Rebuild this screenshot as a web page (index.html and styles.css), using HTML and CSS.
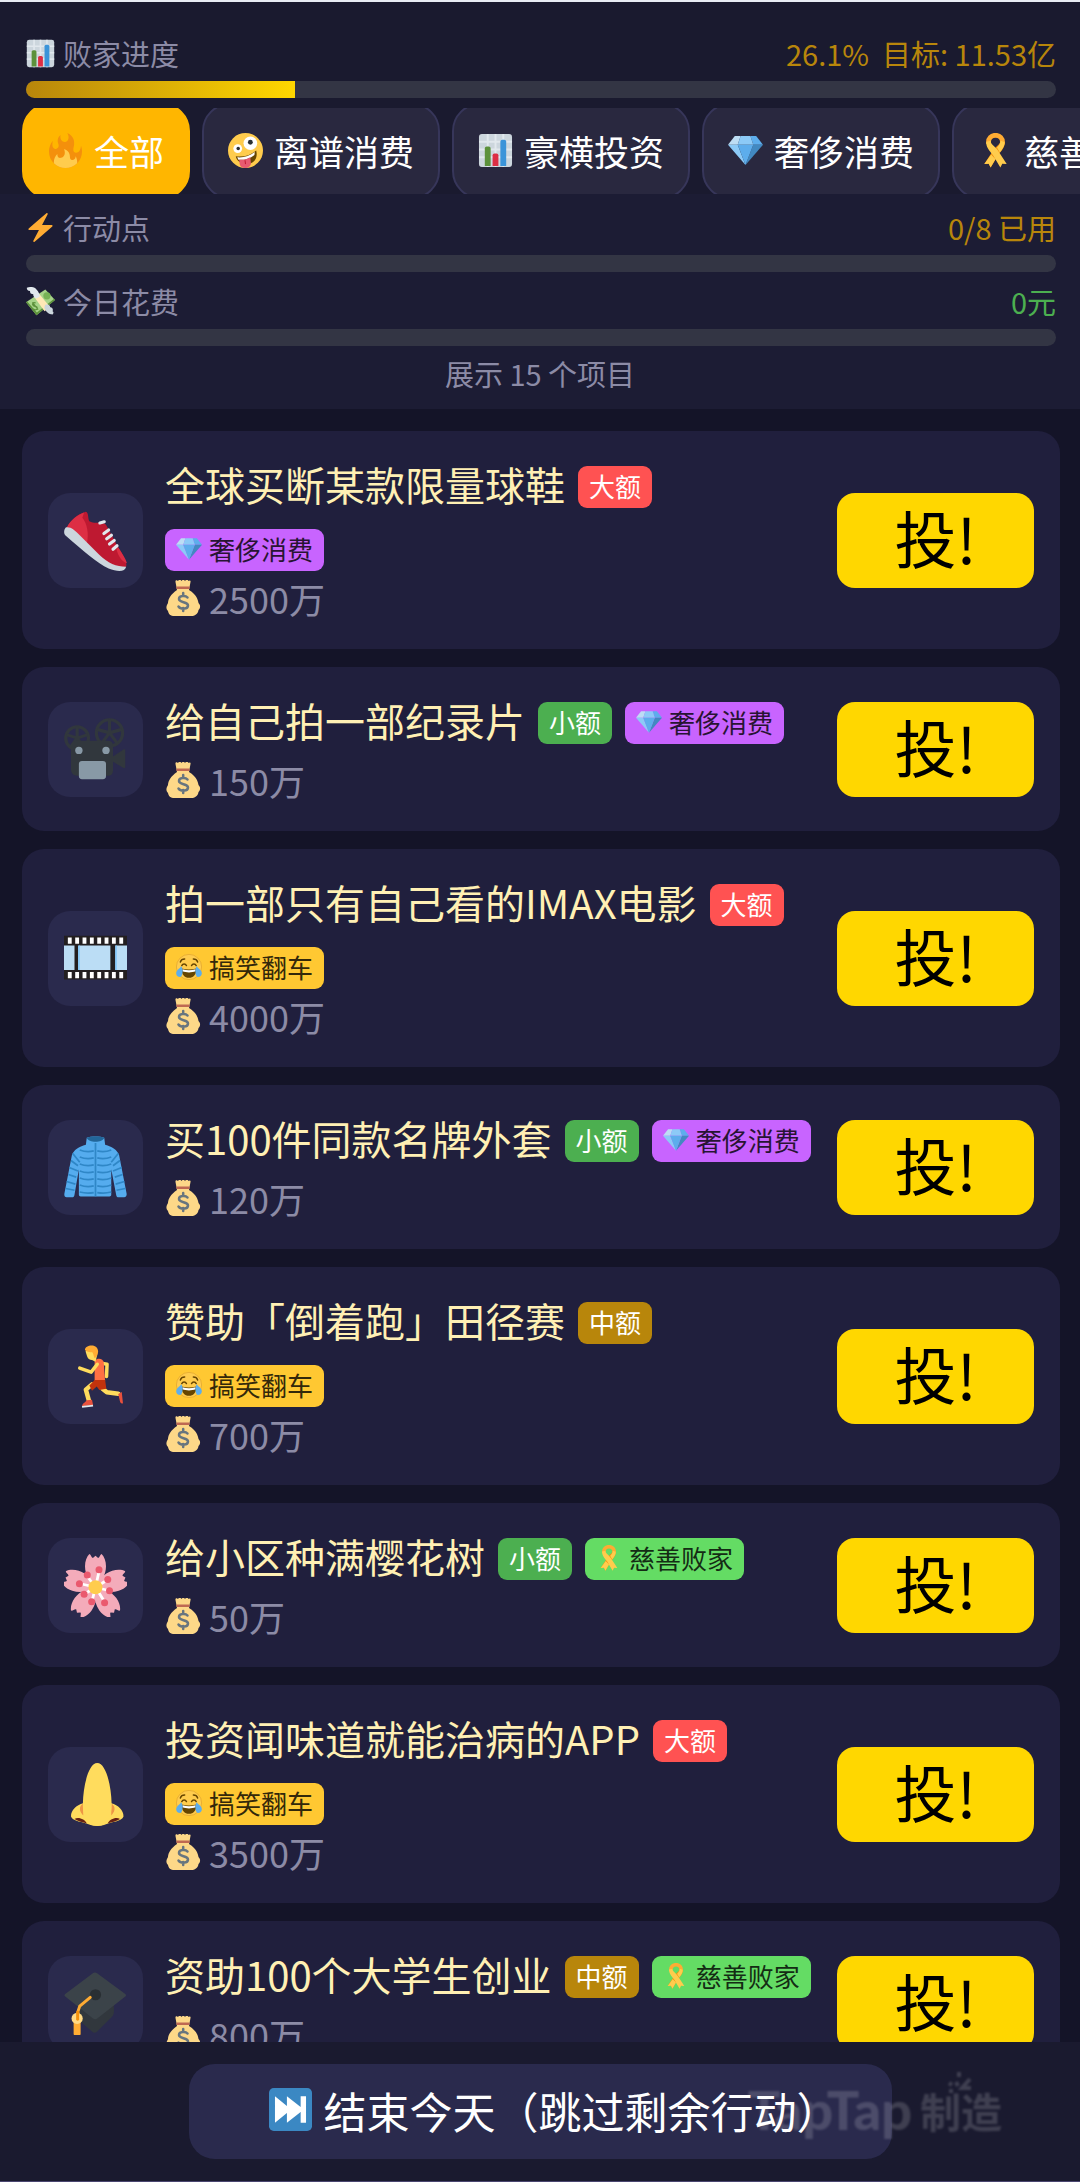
FILE: index.html
```html
<!DOCTYPE html>
<html lang="zh-CN">
<head>
<meta charset="UTF-8" />
<meta name="viewport" content="width=device-width, initial-scale=1" />
<title>败家进度</title>
<link rel="stylesheet" href="styles.css">
</head>
<body>

<!-- Icon set -->
<svg class="sprite" aria-hidden="true">
  <symbol id="i-chart" viewBox="0 0 36 36">
    <rect x="1" y="1" width="34" height="34" rx="3" fill="#ccd6dd"/>
    <path d="M10 1v34M18 1v34M26 1v34M1 9h34M1 17h34M1 25h34" stroke="#e1e8ed" stroke-width="2"/>
    <path fill="#5c913b" d="M13 34H7V16c0-1.100.9-2 2-2h2c1.100 0 2 .9 2 2z"/>
    <path fill="#dd2e44" d="M21 34h-6V23c0-1.100.9-2 2-2h2c1.100 0 2 .9 2 2z"/>
    <path fill="#3b94d9" d="M29 34h-6V9c0-1.100.9-2 2-2h2c1.100 0 2 .9 2 2z"/>
  </symbol>
  <symbol id="i-fire" viewBox="0 0 36 36">
    <path fill="#f4900c" d="M35 19c0-2.062-.367-4.039-1.04-5.868-.46 5.389-3.333 8.157-6.335 6.868-2.812-1.208-.917-5.917-.777-8.164.236-3.809-.012-8.169-6.931-11.794 2.875 5.5.333 8.917-2.333 9.125-2.958.231-5.667-2.542-4.667-7.042-3.238 2.386-3.332 6.402-2.333 9 1.042 2.708-.042 4.958-2.583 5.208-2.84.28-4.418-3.041-2.963-8.333C2.52 10.965 1 14.805 1 19c0 9.389 7.611 17 17 17s17-7.611 17-17z"/>
    <path fill="#ffcc4d" d="M28.394 23.999c.148 3.084-2.561 4.293-4.019 3.709-2.106-.843-1.541-2.291-2.083-5.291s-2.625-5.083-5.708-6c2.25 6.333-1.247 8.667-3.08 9.084-1.872.426-3.753-.001-3.968-4.007C7.352 23.668 6 26.676 6 30c0 .368.023.73.055 1.09C9.125 34.124 13.342 36 18 36s8.875-1.876 11.945-4.91c.032-.36.055-.722.055-1.09 0-2.187-.584-4.236-1.606-6.001z"/>
  </symbol>
  <symbol id="i-zany" viewBox="0 0 36 36">
    <circle cx="18" cy="18" r="18" fill="#ffcc4d"/>
    <circle cx="10" cy="16" r="4.500" fill="#fff"/>
    <circle cx="10.500" cy="16" r="1.800" fill="#292f33"/>
    <circle cx="23" cy="10.500" r="7" fill="#fff"/>
    <circle cx="23" cy="9.500" r="2.500" fill="#292f33"/>
    <path fill="#664500" d="M8 24c8 1 15-1 21-6 2 8-2 13-9 14-6 .5-11-3-12-8z"/>
    <path fill="#fff" d="M9.500 25c7 .5 13-1.500 18-5.500l-.3 3c-5 4-10 5.500-16.500 5z"/>
    <path fill="#e75a70" d="M11.500 27.500c4 .5 8-.5 11.500-2.500l.5 6c0 6-11 7-11.500 1z"/>
    <path stroke="#be1931" fill="none" d="M17.500 28l.5 4"/>
  </symbol>
  <symbol id="i-gem" viewBox="0 0 36 36">
    <path fill="#bdddf4" d="M13 3H7l-7 9h10z"/>
    <path fill="#5dadec" d="M36 12l-7-9h-6l3 9z"/>
    <path fill="#4289c1" d="M26 12h10L18 33z"/>
    <path fill="#8ccaf7" d="M10 12H0l18 21zm3-9l-3 9h16l-3-9z"/>
    <path fill="#5dadec" d="M18 33l-8-21h16z"/>
  </symbol>
  <symbol id="i-ribbon" viewBox="0 0 36 36">
    <path fill="none" stroke="#ffac33" stroke-width="5" d="M11 11C9-.5 27-.5 25 11"/>
    <path fill="#f4900c" d="M27.500 9c.5 5-3 9-7 14L13 35.500l-2-4-4.500.5L15.500 18C19 13 23 12 23 8z"/>
    <path fill="#ffcc4d" d="M13.500 22l4.500 5-5 8.500-2-4-4.500.5zM27.500 9c.3 4-2 7-5 11l-3-5c2-2 3.500-4 3.500-7z"/>
    <path fill="#ffcc4d" d="M8.500 9c-.5 5 3 9 7 14L23 35.500l2-4 4.500.5L20.500 18C17 13 13 12 13 8z"/>
  </symbol>
  <symbol id="i-bolt" viewBox="0 0 36 36">
    <path fill="#ffac33" d="M32.938 15.651C32.792 15.260 32.418 15 32 15H19.925L26.890 1.458c.219-.426.106-.947-.271-1.243C26.437.071 26.218 0 26 0c-.233 0-.466.082-.653.243L18 6.588 3.347 19.243c-.316.273-.43.714-.284 1.105S3.582 21 4 21h12.075L9.110 34.542c-.219.426-.106.947.271 1.243.182.144.401.215.619.215.233 0 .466-.082.653-.243L18 29.412l14.653-12.655c.317-.273.43-.714.285-1.106z"/>
  </symbol>
  <symbol id="i-cash" viewBox="0 0 36 36">
    <path fill="#a6d388" d="M0 19L24 3l12 13-23 19z"/>
    <path fill="#5c913b" d="M0 19l13 16 23-19-1-1.500-21.500 17L1.500 18z"/>
    <circle cx="26" cy="11" r="4.500" fill="#77b255"/>
    <path fill="none" stroke="#5c913b" stroke-width="1.500" d="M12 20c-3-2-5 1-3 3s5 0 5 3-4 3-5 1M8 19l7 9"/>
    <path fill="#ffe8b6" d="M10 12l6-4 14 17-7 5z"/>
    <path fill="#e1e8ed" d="M1 1c5-2 10-1 12 2 3 3 4 6 4 9l-4 2c-4-1-4-4-4-5-4 0-4-3-4-4-3 0-4-2-4-4z"/>
    <path fill="#ccd6dd" d="M24 22c4-1 6 1 6 3 3 0 4 3 3 5 2 1 1 3 0 4-5 0-8-3-9-6-2-2-1-4 0-6z"/>
  </symbol>
  <symbol id="i-bag" viewBox="0 0 36 36">
    <path fill="#fdd888" d="M24 10c8 5 9 10 9.500 13 3 3 1 6 0 7-.5 4-4 6-7 6H9.500c-4 0-6-2-6.500-5-3-3-1-6 0-8 0-4 3-9 9-13z"/>
    <path fill="#fdd888" d="M12 10L10.500 2c-.3-2 1.500-2 2.500-1 1-1.500 2.500-1.500 3.500 0 1-1.500 2.500-1.500 3.500 0 1-1.500 3-1.500 3.500 0 1-1 2.500-.5 2 1L24 10z"/>
    <path fill="#bf6952" d="M11.500 6.500h13V9h-13z"/>
    <path fill="none" stroke="#67757f" stroke-width="2.500" stroke-linecap="round" d="M22.500 17.500c-2-2.500-8.500-2-8.500 1.500 0 4 9 2.500 9 6.500s-7.500 4-9.500 1M18.200 13v3M18.200 28v3"/>
  </symbol>
  <symbol id="i-joy" viewBox="0 0 36 36">
    <circle cx="18" cy="18" r="17.500" fill="#ffcc4d" stroke="#e0a52c"/>
    <path fill="none" stroke="#664500" stroke-width="2" stroke-linecap="round" d="M8 16c1.500-3 5-3 6.500 0M21.500 16c1.500-3 5-3 6.500 0M6 11c1-3 3-4 6-4M30 11c-1-3-3-4-6-4"/>
    <path fill="#664500" d="M8 20c6 2 14 2 20 0 1 8-4 13-10 13S7 28 8 20z"/>
    <path fill="#fff" d="M9 21c6 2 12 2 18 0v3c-5 2-13 2-18 0z"/>
    <path fill="#5dadec" d="M7 17c3 2 3 13-1 15-5 0-7-5-5-8 1-3 5-4 6-7zM29 17c-3 2-3 13 1 15 5 0 7-5 5-8-1-3-5-4-6-7z"/>
  </symbol>
  <symbol id="i-shoe" viewBox="0 0 36 36">
    <path fill="#be1931" d="M12.500 1.500C7 3 3 7 1 12l17 15c6 5 12 7 17.500 6 .8-3-2-7-4.500-11L24 9c-2-2.500-6 0-9.500-2-1-2-.3-5-2-5.500z"/>
    <path fill="#dd2e44" d="M11.500 2C6 4 2.500 8 1 12c5 1 9 4 12 8 1.500-6 0-12-2.500-15zM30 23c1 4 3 7 6 8-1-3-3-6-5-9z"/>
    <path fill="#ccd6dd" d="M1 10.500c3-.5 5 1.500 8 4.500l11 11c5 5 10 7 15.500 7-.5 3-5 3-10 1C19 31 11 24 .7 15c-1-1-.7-3.500.3-4.500z"/>
    <path fill="none" stroke="#e1e8ed" stroke-width="1.800" stroke-linecap="round" d="M20.500 8l2.500-.7M22.800 14l2.700-2M24.400 17l2.700-2M26 20l2.700-2M28 23l2.300-2"/>
  </symbol>
  <symbol id="i-camera" viewBox="0 0 36 36">
    <g fill="none" stroke="#31373d" stroke-width="1.800">
      <circle cx="7.500" cy="11.500" r="6.500"/>
      <circle cx="26" cy="8.500" r="7.500"/>
      <path d="M7.500 11.500V5M7.500 11.500l6-2M7.500 11.500l4 5.500M7.500 11.500l-4 5.500M7.500 11.500l-6-2M26 8.500V1M26 8.500l7-2M26 8.500l4.500 6M26 8.500l-4.500 6M26 8.500l-7-2"/>
    </g>
    <path fill="#31373d" d="M8 13h17c2 0 3 1 3 3v6l6-4c.5-.3 1 0 1 .5V28c0 .6-.5.800-1 .5l-6-3.500v5c0 2-1 3-3 3H8c-2 0-4-1-4-3.500V16c0-2 2-3 4-3z"/>
    <circle cx="8.500" cy="18.500" r="2.100" fill="#8899a6"/>
    <circle cx="24" cy="18.500" r="2.100" fill="#8899a6"/>
    <rect x="8.500" y="24.500" width="15.500" height="10.500" rx="1.800" fill="#8899a6"/>
  </symbol>
  <symbol id="i-film" viewBox="0 0 36 36">
    <path fill="#231f20" d="M0 5h36v25H0z"/>
    <path fill="#bbddf5" d="M0 10.500h6v14H0zM8.500 10.500h18v14h-18zM29.500 10.500H36v14h-6.500z"/>
    <path fill="none" stroke="#88c9f9" d="M8.500 10.500v14M29.700 10.500v14"/>
    <path fill="none" stroke="#fff" stroke-width="3.500" stroke-dasharray="2.200 2" d="M2.200 7.800H34M2.200 27.500H34"/>
  </symbol>
  <symbol id="i-coat" viewBox="0 0 36 36">
    <path fill="#55acee" d="M13 1c2-1 8-1 10 0l.5 4c4 1 7 3 8 6l4.300 22c.2 1-.5 2-1.500 2h-3c-1 0-1.300-.5-1.500-1.500L27 19v14.500c0 .5-.5 1-1 1H9.500c-.5 0-1-.5-1-1V19L6 33.500c-.2 1-.5 1.500-1.500 1.500h-3C.5 35 0 34 .2 33L4.500 11c1-3 4-5 8-6z"/>
    <path fill="#226699" d="M13 1c2-1 8-1 10 0-1 3-9 3-10 0z"/>
    <g fill="none" stroke="#2f87c7" stroke-width="1">
      <path d="M18 4v30.500"/>
      <path d="M9 8q4 1.500 8 .5M19 8.500q4 1 8-.5M9 12q4 1.500 8 .5M19 12.500q4 1 8-.5M9 16q4 1.500 8 .5M19 16.500q4 1 8-.5M9 20q4 1.500 8 .5M19 20.500q4 1 8-.5M9 24q4 1.500 8 .5M19 24.500q4 1 8-.5M9 28q4 1.500 8 .5M19 28.500q4 1 8-.5M9 32q4 1 8 .3M19 32.300q4 .7 8-.3"/>
      <path d="M5 10l4 5M4 14l4 3M3 18l5 2M2.500 22l4.500 1.500M1.500 26l5 1.500M1 30l5 1M31 10l-4 5M32 14l-4 3M33 18l-5 2M33.500 22L29 23.500M34.500 26l-5 1.500M35 30l-5 1"/>
    </g>
  </symbol>
  <symbol id="i-runner" viewBox="0 0 36 36">
    <g fill="none" stroke="#ffdc5d" stroke-linecap="round" stroke-linejoin="round">
      <path stroke-width="2" d="M22 10.500l2.600.5-.3 7"/>
      <path stroke-width="2.600" d="M16 22.500l-3.500 3 1.800 6.500M22 25l2.500 2 6.500.8"/>
    </g>
    <path fill="#ff7043" d="M17.500 9c2-2 5-1 5.200 1l.8 10.500h-6z"/>
    <path fill="#c1330d" d="M17.500 20h6l.7 5-4 .7-1.500-2-2.700 2.500-1.500-3z"/>
    <path fill="none" stroke="#ffdc5d" stroke-width="2" stroke-linecap="round" stroke-linejoin="round" d="M19 11l-3.500 4.500L9 13.200"/>
    <path fill="#ffdc5d" d="M12.300 3.500c1 3 1 5 3.700 5l2 1 1-4-2-4z"/>
    <path fill="#ffac33" d="M12 3c-.5-3 7-4.500 7.500.5 0 2-1 3.500-2 4-.7-1.500-.7-3-1.500-3.500-1 .3-2.500 0-4-1z"/>
    <path fill="#e8513d" d="M13 31.500l3-.2.600 3-6.300.700c0-1.500 1.500-2 2.700-3.500zM31 28l2-1.200.7 6.500c-1 .5-1.500-.3-1.700-1z"/>
    <path stroke="#e1e8ed" d="M10.300 35.300l6.300-.7"/>
  </symbol>
  <symbol id="i-blossom" viewBox="0 0 36 36">
    <g fill="#f4abba">
      <path id="petal" d="M18 19c-3-2-6-7-6-12 0-3 1-5.500 2.500-7 1 .3 1 2 2 2.300L18 1l1.500 1.300c1-.3 1-2 2-2.300C23 1.500 24 4 24 7c0 5-3 10-6 12z"/>
      <use href="#petal" transform="rotate(72 18 19)"/>
      <use href="#petal" transform="rotate(144 18 19)"/>
      <use href="#petal" transform="rotate(216 18 19)"/>
      <use href="#petal" transform="rotate(288 18 19)"/>
    </g>
    <path stroke="#fff" stroke-width="1.600" d="M18 19l2-9M18 19l-4.500-6M18 19l6.500-4M18 19l-8.500-2M18 19l8 2M18 19l-6.500 4M18 19l5 8M18 19l-2 8"/>
    <g fill="#ea596e">
      <circle cx="20" cy="9" r="2"/><circle cx="13.300" cy="12" r="2"/><circle cx="25" cy="14.500" r="2"/><circle cx="8.800" cy="17" r="2"/>
      <circle cx="26" cy="21" r="2"/><circle cx="11.500" cy="23" r="2"/><circle cx="15.800" cy="27.300" r="2"/><circle cx="23.200" cy="27.800" r="2"/>
    </g>
    <circle cx="18" cy="19" r="4" fill="#ffcc4d"/>
  </symbol>
  <symbol id="i-nose" viewBox="0 0 36 36">
    <path fill="#ffdc5d" d="M11 23c-4 1-7 4-7 7.500 1 3 7 3 10 4.500 3 1.300 7 1.300 10 0 3-1.500 9-1.500 10-4.500 0-3.500-3-6.500-7-7.500z"/>
    <path fill="#ef9645" d="M11 23c-3 2-2 5 0 7zM27 23c3 2 2 5 0 7z"/>
    <path fill="#662113" d="M6 32c2-1.500 6 0 7 2.500-2-.7-5-1-7-2.500zM32 32c-2-1.500-6 0-7 2.500 2-.7 5-1 7-2.500z"/>
    <path fill="#ffdc5d" d="M19 0c5 0 8 13 8.200 23 .2 5-1 13-8.200 13s-8.400-8-8.200-13C11 13 14 0 19 0z"/>
  </symbol>
  <symbol id="i-cap" viewBox="0 0 36 36">
    <path fill="#31373d" d="M8 19l20.500-1v5c0 1-.5 2-1.500 3l-8 8c-1 1-2 1-3 0l-7-6z"/>
    <path fill="#3b4349" d="M16.500.7c.8-.6 1.600-.6 2.400 0L35 12.500c.6.500.6 1 0 1.500L19 26.500c-.8.6-1.600.6-2.400 0L.7 14c-.6-.5-.6-1 0-1.500z"/>
    <circle cx="18" cy="13" r="3.200" fill="#292f33"/>
    <path fill="none" stroke="#ffac33" stroke-width="1.700" stroke-linecap="round" d="M15 14.500L9 19.500l-1 3V26"/>
    <path fill="none" stroke="#ffac33" stroke-width="4" stroke-linecap="round" d="M7.500 29v6"/>
    <circle cx="7.500" cy="26.500" r="3.200" fill="#ffd983"/>
    <path fill="none" stroke="#f4900c" stroke-width="1.700" stroke-linecap="round" d="M7.800 23v4"/>
  </symbol>
  <symbol id="i-next" viewBox="0 0 36 36">
    <rect width="36" height="36" rx="4" fill="#3b88c3"/>
    <path fill="#fff" d="M5 7l10 8V7l11.500 9V7H31v22h-4.500v-9L15 29v-8L5 29z"/>
  </symbol>
</svg>

<div class="app">
  <header class="top">
    <div class="stat">
      <div class="stat-row">
        <span class="stat-label"><svg class="icon"><use href="#i-chart"/></svg>败家进度</span>
        <span class="stat-value">26.1%&nbsp; 目标: 11.53亿</span>
      </div>
      <div class="bar"><div class="bar-fill" style="width: 26.1%"></div></div>
    </div>

    <!-- Category filter -->
    <nav class="tabs">
      <button class="tab active"><svg class="icon"><use href="#i-fire"/></svg>全部</button>
      <button class="tab"><svg class="icon"><use href="#i-zany"/></svg>离谱消费</button>
      <button class="tab"><svg class="icon"><use href="#i-chart"/></svg>豪横投资</button>
      <button class="tab"><svg class="icon"><use href="#i-gem"/></svg>奢侈消费</button>
      <button class="tab"><svg class="icon"><use href="#i-ribbon"/></svg>慈善败家</button>
    </nav>
  </header>

  <section class="today">
    <div class="stat">
      <div class="stat-row">
        <span class="stat-label"><svg class="icon"><use href="#i-bolt"/></svg>行动点</span>
        <span class="stat-value">0/8 已用</span>
      </div>
      <div class="bar"></div>
    </div>
    <div class="stat">
      <div class="stat-row">
        <span class="stat-label"><svg class="icon"><use href="#i-cash"/></svg>今日花费</span>
        <span class="stat-value spent">0元</span>
      </div>
      <div class="bar"></div>
    </div>
    <p class="count">展示 15 个项目</p>
  </section>

  <!-- Project list -->
  <main class="list">
    <article class="card">
      <div class="thumb"><svg><use href="#i-shoe"/></svg></div>
      <div class="info">
        <div class="head">
          <h2>全球买断某款限量球鞋</h2>
          <span class="tag big">大额</span>
          <span class="tag luxury"><svg class="icon"><use href="#i-gem"/></svg>奢侈消费</span>
        </div>
        <p class="price"><svg class="icon"><use href="#i-bag"/></svg>2500万</p>
      </div>
      <button class="buy">投!</button>
    </article>

    <article class="card">
      <div class="thumb"><svg><use href="#i-camera"/></svg></div>
      <div class="info">
        <div class="head">
          <h2>给自己拍一部纪录片</h2>
          <span class="tag small">小额</span>
          <span class="tag luxury"><svg class="icon"><use href="#i-gem"/></svg>奢侈消费</span>
        </div>
        <p class="price"><svg class="icon"><use href="#i-bag"/></svg>150万</p>
      </div>
      <button class="buy">投!</button>
    </article>

    <article class="card">
      <div class="thumb"><svg><use href="#i-film"/></svg></div>
      <div class="info">
        <div class="head">
          <h2>拍一部只有自己看的IMAX电影</h2>
          <span class="tag big">大额</span>
          <span class="tag funny"><svg class="icon"><use href="#i-joy"/></svg>搞笑翻车</span>
        </div>
        <p class="price"><svg class="icon"><use href="#i-bag"/></svg>4000万</p>
      </div>
      <button class="buy">投!</button>
    </article>

    <article class="card">
      <div class="thumb"><svg><use href="#i-coat"/></svg></div>
      <div class="info">
        <div class="head">
          <h2>买100件同款名牌外套</h2>
          <span class="tag small">小额</span>
          <span class="tag luxury"><svg class="icon"><use href="#i-gem"/></svg>奢侈消费</span>
        </div>
        <p class="price"><svg class="icon"><use href="#i-bag"/></svg>120万</p>
      </div>
      <button class="buy">投!</button>
    </article>

    <article class="card">
      <div class="thumb"><svg><use href="#i-runner"/></svg></div>
      <div class="info">
        <div class="head">
          <h2>赞助「倒着跑」田径赛</h2>
          <span class="tag medium">中额</span>
          <span class="tag funny"><svg class="icon"><use href="#i-joy"/></svg>搞笑翻车</span>
        </div>
        <p class="price"><svg class="icon"><use href="#i-bag"/></svg>700万</p>
      </div>
      <button class="buy">投!</button>
    </article>

    <article class="card">
      <div class="thumb"><svg><use href="#i-blossom"/></svg></div>
      <div class="info">
        <div class="head">
          <h2>给小区种满樱花树</h2>
          <span class="tag small">小额</span>
          <span class="tag charity"><svg class="icon"><use href="#i-ribbon"/></svg>慈善败家</span>
        </div>
        <p class="price"><svg class="icon"><use href="#i-bag"/></svg>50万</p>
      </div>
      <button class="buy">投!</button>
    </article>

    <article class="card">
      <div class="thumb"><svg><use href="#i-nose"/></svg></div>
      <div class="info">
        <div class="head">
          <h2>投资闻味道就能治病的APP</h2>
          <span class="tag big">大额</span>
          <span class="tag funny"><svg class="icon"><use href="#i-joy"/></svg>搞笑翻车</span>
        </div>
        <p class="price"><svg class="icon"><use href="#i-bag"/></svg>3500万</p>
      </div>
      <button class="buy">投!</button>
    </article>

    <article class="card">
      <div class="thumb"><svg><use href="#i-cap"/></svg></div>
      <div class="info">
        <div class="head">
          <h2>资助100个大学生创业</h2>
          <span class="tag medium">中额</span>
          <span class="tag charity"><svg class="icon"><use href="#i-ribbon"/></svg>慈善败家</span>
        </div>
        <p class="price"><svg class="icon"><use href="#i-bag"/></svg>800万</p>
      </div>
      <button class="buy">投!</button>
    </article>
  </main>

  <footer class="bottom">
    <button class="end-day"><svg class="icon"><use href="#i-next"/></svg>结束今天（跳过剩余行动）</button>
    <div class="watermark">
      <span class="brand">TapTap</span><span class="make">制造</span>
      <svg class="spark" viewBox="0 0 28 24"><path d="M3 13l3 2M13 2v5M24 9l-8 9h9M10 12l2 4M3 21h4"/></svg>
    </div>
  </footer>
</div>

</body>
</html>
```
FILE: styles.css
```css
* { box-sizing: border-box; margin: 0; padding: 0; }
body { background: #141428; color: #fff; font-family: 'Noto Sans CJK SC', 'Noto Sans', sans-serif; }
button { font-family: inherit; border: none; color: inherit; cursor: pointer; }
.sprite { position: absolute; width: 0; height: 0; }
.icon { width: 1em; height: 1em; flex: none; }

.app { display: flex; flex-direction: column; height: 100vh; border-top: 2px solid #e8ecf4; border-bottom: 1px solid #4a4670; }

/* Progress header */
.top { flex: none; background: #1a1a2f; padding-top: 33px; }
.stat { padding: 0 24px 0 26px; }
.stat-row { display: flex; justify-content: space-between; align-items: center; height: 36px; margin-bottom: 10px; font-size: 29px; line-height: 36px; }
.stat-label { display: flex; align-items: center; gap: 8px; color: #8c8ba6; }
.stat-value { color: #b8860b; }
.stat-value.spent { color: #4caf50; }
.bar { height: 17px; border-radius: 9px; background: #333544; overflow: hidden; }
.bar-fill { height: 100%; background: linear-gradient(90deg, #b8860b, #ffd700); }

.tabs { display: flex; align-items: center; gap: 12px; height: 86px; margin-top: 10px; padding-left: 22px; overflow: hidden; }
.tab { display: flex; align-items: center; gap: 11px; flex: none; height: 96px; padding: 0 24px 2px; border: 2px solid #37365a; border-radius: 28px; background: #29283f; font-size: 35px; white-space: nowrap; }
.tab.active { background: #ffb600; border-color: #ffb600; }

.today { flex: none; display: flex; flex-direction: column; gap: 11px; padding: 15px 0 20px; background: #1c1c34; }
.count { text-align: center; font-size: 29px; line-height: 32px; color: #8c8ba6; }

/* Project cards */
.list { flex: 1; min-height: 0; overflow: hidden; display: flex; flex-direction: column; gap: 18px; padding: 22px 20px 0 22px; }
.card { flex: none; display: flex; align-items: center; gap: 22px; padding: 26px; border-radius: 22px; background: #201f3d; }
.thumb { flex: none; display: flex; align-items: center; justify-content: center; width: 95px; height: 95px; border-radius: 22px; background: #2a2a4d; }
.thumb svg { width: 63px; height: 63px; }
.info { flex: 1; min-width: 0; }
.head { display: flex; flex-wrap: wrap; align-items: center; column-gap: 13px; row-gap: 12px; }
.head h2 { padding-bottom: 6px; font-size: 40px; font-weight: 400; line-height: 54px; color: #fff0b4; }
.tag { display: flex; align-items: center; gap: 7px; height: 42px; padding: 0 11px 2px; border-radius: 9px; font-size: 26px; line-height: 40px; }
.tag.big { background: #ff5252; }
.tag.medium { background: #b8860b; }
.tag.small { background: #4caf50; }
.tag.luxury { background: #c864ff; color: #281433; }
.tag.funny { background: #ffc832; color: #33280a; }
.tag.charity { background: #64dc64; color: #142c14; }
.price { display: flex; align-items: center; gap: 8px; margin-top: 8px; padding-bottom: 6px; font-size: 36px; line-height: 38px; color: #8c8ba6; }
.buy { flex: none; width: 197px; height: 95px; padding-bottom: 6px; border-radius: 18px; background: #ffd700; color: #000; font-size: 62px; line-height: 80px; }

/* Bottom bar */
.bottom { flex: none; position: relative; display: flex; justify-content: center; padding: 22px 0; background: #1a1a2f; }
.end-day { display: flex; align-items: center; gap: 12px; height: 95px; padding: 0 52px 4px 80px; border-radius: 26px; background: #2a2a4d; font-size: 43px; }
.watermark { position: absolute; right: 78px; top: 38px; display: flex; align-items: center; gap: 8px; color: #fff; opacity: .16; filter: blur(1px); pointer-events: none; line-height: 60px; }
.brand { font-family: Lato, sans-serif; font-weight: 900; font-size: 54px; }
.make { font-weight: 700; font-size: 41px; }
.spark { position: absolute; right: 28px; top: -10px; width: 28px; height: 24px; fill: none; stroke: #fff; stroke-width: 4; }
```
